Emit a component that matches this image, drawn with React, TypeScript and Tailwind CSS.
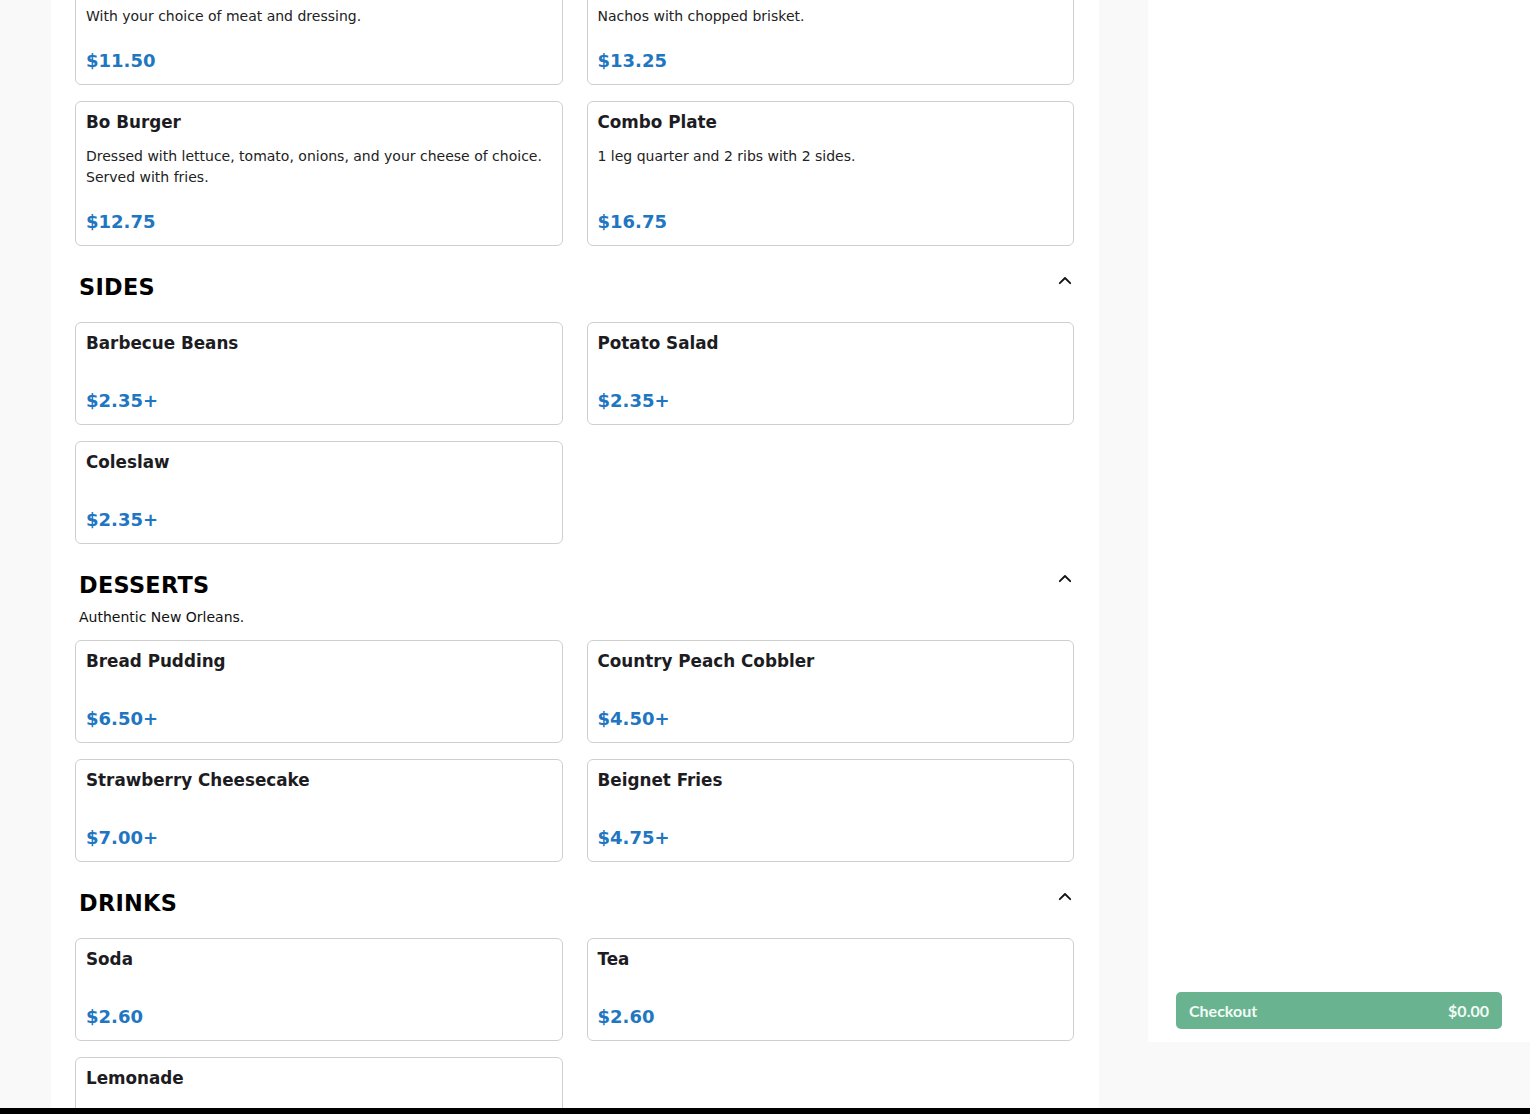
import React from 'react';

type Item = { name: string; description?: string; price: string };
type Section = { title?: string; subtitle?: string; items: Item[] };

const sections: Section[] = [
  {
    items: [
      { name: 'Po-Boy', description: 'With your choice of meat and dressing.', price: '$11.50' },
      { name: 'Brisket Nachos', description: 'Nachos with chopped brisket.', price: '$13.25' },
      { name: 'Bo Burger', description: 'Dressed with lettuce, tomato, onions, and your cheese of choice. Served with fries.', price: '$12.75' },
      { name: 'Combo Plate', description: '1 leg quarter and 2 ribs with 2 sides.', price: '$16.75' },
    ],
  },
  {
    title: 'SIDES',
    items: [
      { name: 'Barbecue Beans', price: '$2.35+' },
      { name: 'Potato Salad', price: '$2.35+' },
      { name: 'Coleslaw', price: '$2.35+' },
    ],
  },
  {
    title: 'DESSERTS',
    subtitle: 'Authentic New Orleans.',
    items: [
      { name: 'Bread Pudding', price: '$6.50+' },
      { name: 'Country Peach Cobbler', price: '$4.50+' },
      { name: 'Strawberry Cheesecake', price: '$7.00+' },
      { name: 'Beignet Fries', price: '$4.75+' },
    ],
  },
  {
    title: 'DRINKS',
    items: [
      { name: 'Soda', price: '$2.60' },
      { name: 'Tea', price: '$2.60' },
      { name: 'Lemonade', price: '$2.60' },
    ],
  },
];

const ChevronUp = () => (
  <svg width="16" height="16" viewBox="0 0 16 16" fill="none" className="mt-[3px] mr-[1px] shrink-0">
    <path d="M2.8 10.2 L8 5 L13.2 10.2" stroke="#111" strokeWidth="1.8" strokeLinecap="round" strokeLinejoin="round" />
  </svg>
);

const ItemCard = ({ item }: { item: Item }) => (
  <div className="bg-white border border-[#cfcfcf] rounded-[6px] px-[10px] pt-[8px] pb-[10px] flex flex-col">
    <div className="text-[16.8px] leading-[24px] font-bold text-[#1c1c22]">{item.name}</div>
    <div className="mt-3 text-[14px] leading-[21px] text-[#222] flex-1">{item.description}</div>
    <div className="mt-[20px] text-[18px] leading-[27px] font-bold text-[#2176c1]">{item.price}</div>
  </div>
);

const MenuSection = ({ section }: { section: Section }) => (
  <div className={section.title ? 'mt-6' : ''}>
    {section.title && (
      <div className={section.subtitle ? 'mb-[12px]' : 'mb-[18px]'}>
        <div className="flex items-start justify-between pl-1">
          <h2 className="text-[22.4px] leading-[34px] font-bold text-black tracking-[0.3px]">{section.title}</h2>
          <ChevronUp />
        </div>
        {section.subtitle && (
          <p className="pl-1 mt-[5px] text-[14px] leading-[21px] text-[#111]">{section.subtitle}</p>
        )}
      </div>
    )}
    <div className="grid grid-cols-2 gap-x-6 gap-y-4">
      {section.items.map((item) => (
        <ItemCard key={item.name} item={item} />
      ))}
    </div>
  </div>
);

export default function App() {
  return (
    <div className="h-screen flex flex-col bg-[#f9f9f9] overflow-hidden" style={{ fontFamily: '"DejaVu Sans", sans-serif' }}>
      <div className="flex-1 flex min-h-0">
        <div className="w-[51px] shrink-0" />
        <main className="w-[1048px] shrink-0 bg-white overflow-hidden pl-6 pr-[25px]">
          <div className="-mt-[39px]">
            {sections.map((s, i) => (
              <MenuSection key={i} section={s} />
            ))}
          </div>
        </main>
        <div className="w-[49px] shrink-0" />
        <aside className="flex-1 flex flex-col">
          <div className="h-[1042px] bg-white flex flex-col justify-end px-7 pb-[13px]">
            <button
              className="h-[37px] rounded-[5px] bg-[#6ab391] text-[#f2fbf5] flex items-center justify-between px-[13px] text-[16px] font-bold"
              style={{ fontFamily: 'Lato, sans-serif' }}
            >
              <span>Checkout</span>
              <span>$0.00</span>
            </button>
          </div>
        </aside>
      </div>
      <div className="h-[6px] bg-black shrink-0" />
    </div>
  );
}
